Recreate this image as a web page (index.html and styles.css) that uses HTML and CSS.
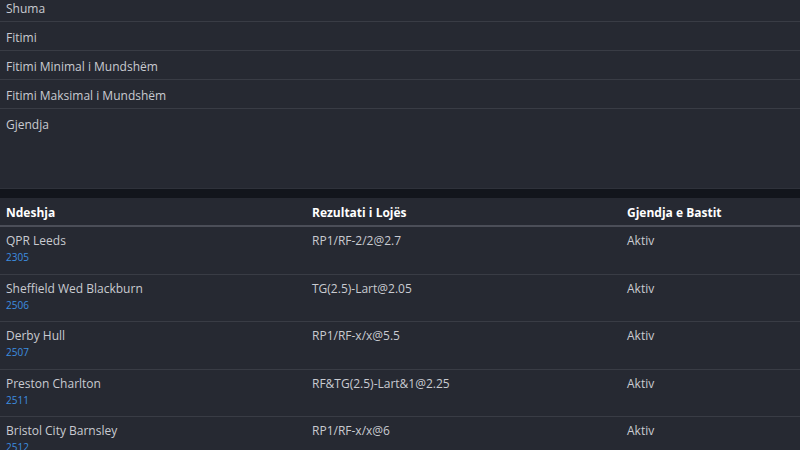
FILE: index.html
```html
<!DOCTYPE html>
<html lang="sq">
<head>
<meta charset="utf-8">
<title>Basti</title>
<link rel="stylesheet" href="styles.css">
</head>
<body>
<div class="page">
  <section class="summary">
    <ul class="summary-list">
      <li class="summary-row">Shuma</li>
      <li class="summary-row">Fitimi</li>
      <li class="summary-row">Fitimi Minimal i Mundshëm</li>
      <li class="summary-row">Fitimi Maksimal i Mundshëm</li>
      <li class="summary-row last">Gjendja</li>
    </ul>
  </section>
  <div class="divider"></div>
  <table class="bets">
    <thead>
      <tr>
        <th class="col-match">Ndeshja</th>
        <th class="col-result">Rezultati i Lojës</th>
        <th class="col-status">Gjendja e Bastit</th>
      </tr>
    </thead>
    <tbody>
      <tr>
        <td><div class="name">QPR Leeds</div><div class="code">2305</div></td>
        <td><div class="name">RP1/RF-2/2@2.7</div></td>
        <td><div class="name">Aktiv</div></td>
      </tr>
      <tr>
        <td><div class="name">Sheffield Wed Blackburn</div><div class="code">2506</div></td>
        <td><div class="name">TG(2.5)-Lart@2.05</div></td>
        <td><div class="name">Aktiv</div></td>
      </tr>
      <tr>
        <td><div class="name">Derby Hull</div><div class="code">2507</div></td>
        <td><div class="name">RP1/RF-x/x@5.5</div></td>
        <td><div class="name">Aktiv</div></td>
      </tr>
      <tr>
        <td><div class="name">Preston Charlton</div><div class="code">2511</div></td>
        <td><div class="name">RF&amp;TG(2.5)-Lart&amp;1@2.25</div></td>
        <td><div class="name">Aktiv</div></td>
      </tr>
      <tr>
        <td><div class="name">Bristol City Barnsley</div><div class="code">2512</div></td>
        <td><div class="name">RP1/RF-x/x@6</div></td>
        <td><div class="name">Aktiv</div></td>
      </tr>
    </tbody>
  </table>
</div>
</body>
</html>
```
FILE: styles.css
```css
html, body {
  margin: 0;
  padding: 0;
  background: #262932;
  overflow: hidden;
}
body {
  font-family: "Open Sans", "Noto Sans", sans-serif;
  font-size: 12px;
  color: #c9cbd1;
}
.page {
  width: 800px;
}
.summary {
  height: 195px;
  margin-top: -7px;
  border-bottom: 1px solid #2f323b;
}
.summary-list {
  list-style: none;
  margin: 0;
  padding: 0;
}
.summary-row {
  height: 24px;
  line-height: 24px;
  padding: 4px 6px 0;
  border-bottom: 1px solid #393c45;
}
.summary-row.last {
  border-bottom: none;
}
.divider {
  height: 9px;
  background: #12151c;
}
.bets {
  width: 800px;
  border-collapse: collapse;
  table-layout: fixed;
}
.col-match { width: 294px; }
.col-result { width: 303px; }
.bets th {
  text-align: left;
  font-weight: 700;
  color: #ffffff;
  padding: 7px 6px 4px;
  line-height: 16px;
  border-bottom: 2px solid #4b4e58;
}
.bets td {
  vertical-align: top;
  padding: 6px 6px 8.5px;
  border-bottom: 1px solid #393c45;
}
.name {
  line-height: 16px;
}
.code {
  line-height: 16px;
  font-size: 10px;
  color: #3d8ee0;
}
```
